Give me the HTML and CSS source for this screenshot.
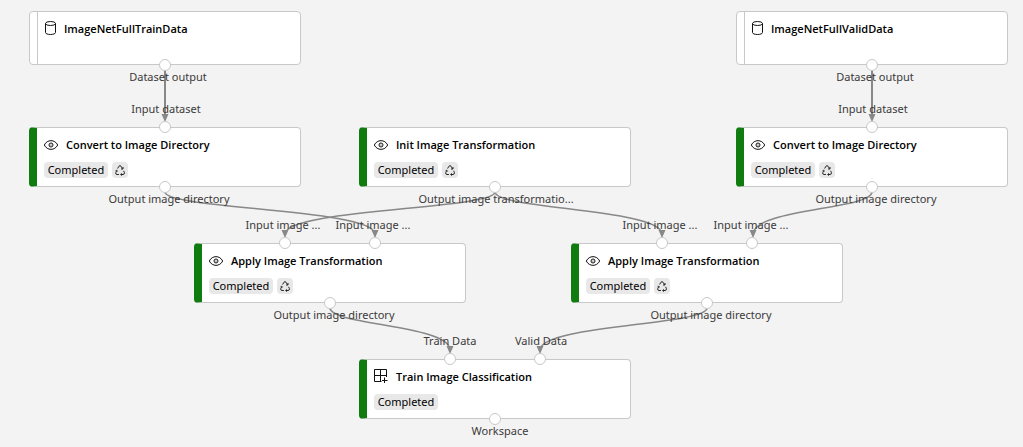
FILE: index.html
```
<!DOCTYPE html>
<html lang="en">
<head>
<meta charset="utf-8">
<title>Pipeline graph</title>
<link rel="stylesheet" href="styles.css">
</head>
<body>
<svg class="symbols" aria-hidden="true">
  <symbol id="data" viewBox="0 0 16 16"><g fill="none" stroke="#111"><ellipse cx="6.500" cy="2.500" rx="5" ry="2"/><path d="M1.500 2.500v9c0 1.200 2.200 2 5 2s5-.8 5-2v-9"/></g></symbol>
  <symbol id="eye" viewBox="0 0 16 16"><g fill="none" stroke="#111"><path d="M1.300 8C4.200 2.200 11.800 2.200 14.700 8C11.800 13.800 4.200 13.800 1.300 8Z"/><circle cx="8" cy="8" r="2"/></g><circle cx="8" cy="8" r=".6" fill="#111"/></symbol>
  <symbol id="grid" viewBox="0 0 16 16"><path d="M13.500 8v-7.500h-12v12h7M7.500 .5v12M1.500 6.500h12M11.500 8.500v5.500M9 11.500h5.500" fill="none" stroke="#111"/></symbol>
  <symbol id="recycle" viewBox="0 0 16 16"><g fill="none" stroke="#222" stroke-linejoin="round"><path d="M5.600 6.500 6.900 4.300Q8 2.900 9.100 4.300L10.500 6.700M11 5V7H9M11.600 8.800 12.400 10.500Q12.800 12.300 11 12.500H9M6.900 12.500H5Q3.200 12.300 3.800 10.500L4.800 8.500"/><path d="M9.800 11.200 8.500 12.500 9.800 13.800M3.600 8.600 4.900 8.200 5.400 9.500" stroke-width=".8"/></g></symbol>
</svg>
<main class="canvas">
  <svg class="edges" aria-hidden="true">
    <defs><marker id="arrow" markerUnits="userSpaceOnUse" markerWidth="8" markerHeight="9" refX="4" refY="4" orient="auto"><path d="M0 0.500 8 4 0 7.500Z" fill="#888"/></marker></defs>
    <path class="edge straight" d="M165 70V118"/>
    <path class="edge straight" d="M872 70V118"/>
    <path class="edge" d="M165 192C165 209 375 209 375 234"/>
    <path class="edge" d="M495 192C495 209 285 209 285 234"/>
    <path class="edge" d="M495 192C495 209 662 209 662 234"/>
    <path class="edge" d="M872 192C872 209 753 209 753 234"/>
    <path class="edge" d="M330 308C330 325 450 325 450 350"/>
    <path class="edge" d="M707 308C707 325 540 325 540 350"/>
  </svg>

  <article class="node dataset col-a row-1"><h2 class="title"><svg class="icon"><use href="#data"/></svg>ImageNetFullTrainData</h2><i class="port out"></i></article>
  <article class="node dataset col-e row-1"><h2 class="title"><svg class="icon"><use href="#data"/></svg>ImageNetFullValidData</h2><i class="port out"></i></article>

  <article class="node step col-a row-2"><h2 class="title"><svg class="icon"><use href="#eye"/></svg>Convert to Image Directory</h2><div class="badges"><span class="badge">Completed</span><span class="badge reuse"><svg class="icon"><use href="#recycle"/></svg></span></div><i class="port in"></i><i class="port out"></i></article>
  <article class="node step col-c row-2"><h2 class="title"><svg class="icon"><use href="#eye"/></svg>Init Image Transformation</h2><div class="badges"><span class="badge">Completed</span><span class="badge reuse"><svg class="icon"><use href="#recycle"/></svg></span></div><i class="port out"></i></article>
  <article class="node step col-e row-2"><h2 class="title"><svg class="icon"><use href="#eye"/></svg>Convert to Image Directory</h2><div class="badges"><span class="badge">Completed</span><span class="badge reuse"><svg class="icon"><use href="#recycle"/></svg></span></div><i class="port in"></i><i class="port out"></i></article>

  <article class="node step col-b row-3"><h2 class="title"><svg class="icon"><use href="#eye"/></svg>Apply Image Transformation</h2><div class="badges"><span class="badge">Completed</span><span class="badge reuse"><svg class="icon"><use href="#recycle"/></svg></span></div><i class="port in first"></i><i class="port in second"></i><i class="port out"></i></article>
  <article class="node step col-d row-3"><h2 class="title"><svg class="icon"><use href="#eye"/></svg>Apply Image Transformation</h2><div class="badges"><span class="badge">Completed</span><span class="badge reuse"><svg class="icon"><use href="#recycle"/></svg></span></div><i class="port in first"></i><i class="port in second"></i><i class="port out"></i></article>

  <article class="node step col-c row-4"><h2 class="title"><svg class="icon"><use href="#grid"/></svg>Train Image Classification</h2><div class="badges"><span class="badge">Completed</span></div><i class="port in first"></i><i class="port in second"></i><i class="port out"></i></article>

  <span class="label" style="left:168px;top:69px">Dataset output</span>
  <span class="label" style="left:875px;top:69px">Dataset output</span>
  <span class="label" style="left:166px;top:101px">Input dataset</span>
  <span class="label" style="left:873px;top:101px">Input dataset</span>
  <span class="label" style="left:169px;top:191px">Output image directory</span>
  <span class="label" style="left:496px;top:191px">Output image transformatio...</span>
  <span class="label" style="left:876px;top:191px">Output image directory</span>
  <span class="label" style="left:283px;top:217px">Input image ...</span>
  <span class="label" style="left:373px;top:217px">Input image ...</span>
  <span class="label" style="left:660px;top:217px">Input image ...</span>
  <span class="label" style="left:751px;top:217px">Input image ...</span>
  <span class="label" style="left:334px;top:307px">Output image directory</span>
  <span class="label" style="left:711px;top:307px">Output image directory</span>
  <span class="label" style="left:450px;top:333px">Train Data</span>
  <span class="label" style="left:541px;top:333px">Valid Data</span>
  <span class="label" style="left:500px;top:423px">Workspace</span>
</main>
</body>
</html>
```
FILE: styles.css
```
* { box-sizing: border-box; }
body {
  margin: 0;
  background: #f3f3f3;
  font: 11px/16px "Noto Sans", "Open Sans", sans-serif;
  color: #000;
}
.symbols { display: none; }
.canvas { position: relative; min-height: 100vh; overflow: hidden; }
.edges { position: absolute; inset: 0; width: 100%; height: 100%; }
.edge { fill: none; stroke: #888; stroke-width: 1.5px; marker-end: url(#arrow); }
.straight { stroke-width: 2px; }

.node {
  position: absolute;
  width: 272px;
  padding: 9px 14px 8px;
  background: #fff;
  border: 1px solid #c8c8c8;
  border-radius: 4px;
}
.dataset { min-height: 54px; background: linear-gradient(to right, #fff 7px, #c8c8c8 7px, #c8c8c8 8px, #fff 8px); }
.step { border-left: 8px solid #107c10; padding-left: 6px; }
.col-a { left: 29px; }
.col-b { left: 194px; }
.col-c { left: 359px; }
.col-d { left: 571px; }
.col-e { left: 736px; }
.row-1 { top: 11px; }
.row-2 { top: 127px; }
.row-3 { top: 243px; }
.row-4 { top: 359px; }

.title {
  display: flex;
  align-items: center;
  gap: 7px;
  margin: 0;
  font: 600 11px/16px "Open Sans", sans-serif;
  white-space: nowrap;
}
.dataset .title { gap: 4px; }
.icon { width: 16px; height: 16px; flex: none; }
.badges { display: flex; gap: 4px; margin-top: 9px; padding-left: 1px; }
.badge {
  display: flex;
  align-items: center;
  justify-content: center;
  height: 16px;
  min-width: 64px;
  padding: 0 3px;
  border-radius: 4px;
  background: #e8e8e8;
}
.reuse { min-width: 0; padding: 0; }

.port {
  position: absolute;
  left: 135px;
  width: 12px;
  height: 12px;
  border: 1px solid #c8c8c8;
  border-radius: 50%;
  background: #fff;
  transform: translateX(-50%);
}
.step .port { left: 128px; }
.step .first { left: 83px; }
.step .second { left: 173px; }
.in { top: -7px; }
.out { bottom: -7px; }

.label {
  position: absolute;
  color: #3b3a39;
  white-space: nowrap;
  transform: translateX(-50%);
}
```
